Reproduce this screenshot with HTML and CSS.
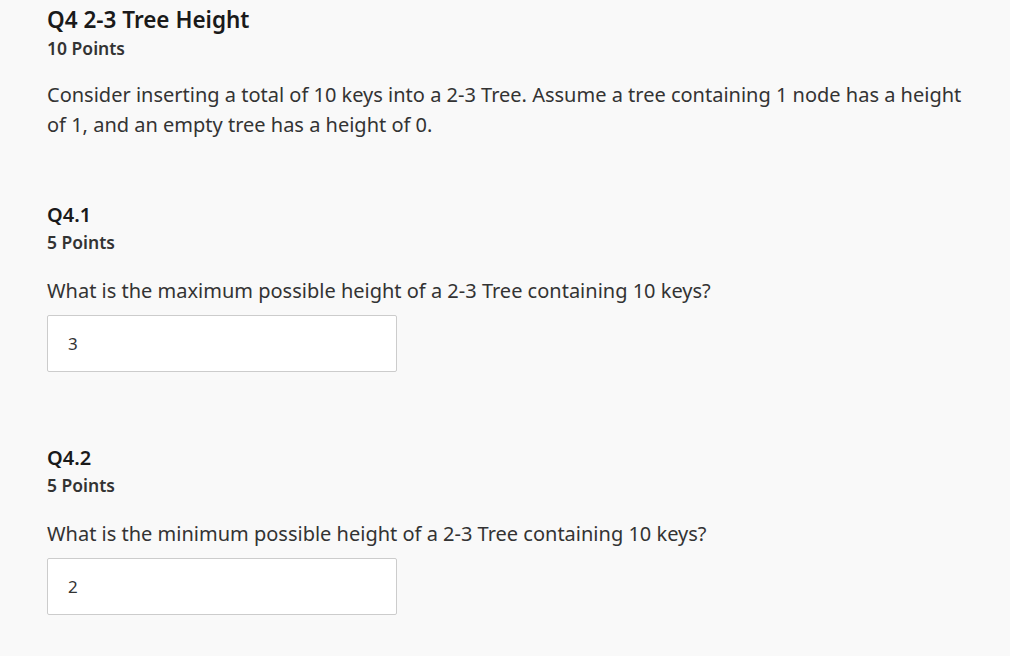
FILE: index.html
```html
<!DOCTYPE html>
<html>
<head>
<meta charset="utf-8">
<link rel="stylesheet" href="styles.css">
</head>
<body>
<main class="page">
  <section class="question">
    <h1 class="q-title">Q4 2-3 Tree Height</h1>
    <div class="q-points">10 Points</div>
    <p class="q-text">Consider inserting a total of 10 keys into a 2-3 Tree. Assume a tree containing 1 node has a height of 1, and an empty tree has a height of 0.</p>
  </section>
  <section class="subquestion">
    <h2 class="sq-title">Q4.1</h2>
    <div class="q-points">5 Points</div>
    <p class="sq-text">What is the maximum possible height of a 2-3 Tree containing 10 keys?</p>
    <div class="answer">3</div>
  </section>
  <section class="subquestion">
    <h2 class="sq-title">Q4.2</h2>
    <div class="q-points">5 Points</div>
    <p class="sq-text">What is the minimum possible height of a 2-3 Tree containing 10 keys?</p>
    <div class="answer">2</div>
  </section>
</main>
</body>
</html>
```
FILE: styles.css
```css
html, body {
  margin: 0;
  padding: 0;
  background: #f9f9f9;
}
body {
  font-family: "Noto Sans", "Open Sans", sans-serif;
  color: #333;
}
.page {
  padding: 4px 47px 0 47px;
}
.q-title {
  margin: 0;
  font-size: 22.5px;
  font-weight: 600;
  line-height: 32px;
  color: #1a1a1a;
}
.q-points {
  font-size: 17.5px;
  font-weight: 600;
  line-height: 24px;
  color: #333;
}
.q-text {
  margin: 20px 0 0 0;
  font-size: 20px;
  line-height: 30px;
  color: #333;
}
.subquestion {
  margin-top: 60px;
}
.subquestion + .subquestion {
  margin-top: 71px;
}
.sq-title {
  margin: 0;
  font-size: 20px;
  font-weight: 600;
  line-height: 30px;
  color: #1a1a1a;
}
.sq-text {
  margin: 22px 0 0 0;
  font-size: 20px;
  line-height: 30px;
}
.answer {
  margin-top: 9px;
  width: 328px;
  height: 55px;
  border: 1px solid #ccc;
  border-radius: 2px;
  background: #fff;
  padding: 0 0 0 20px;
  display: flex;
  align-items: center;
  font-size: 17px;
  color: #333;
}
```
